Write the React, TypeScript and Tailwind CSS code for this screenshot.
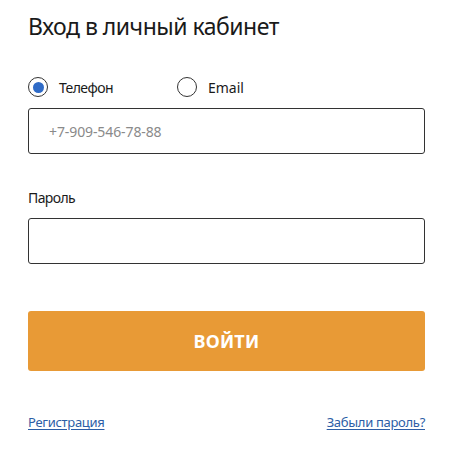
import React from "react";

export default function App() {
  return (
    <div className="w-[457px] h-[450px] bg-white px-[28px] pt-[11px]" style={{ fontFamily: '"Noto Sans", "Open Sans", sans-serif' }}>
      <h1 className="text-[23px] leading-[30px] text-[#1a1a1a] tracking-[-0.5px]">Вход в личный кабинет</h1>
      <div className="mt-[35px] flex items-center h-[22px] text-[14px] text-[#1a1a1a]">
        <label className="flex items-center w-[149px]">
          <span className="w-[20px] h-[20px] rounded-full border border-[#333] flex items-center justify-center">
            <span className="w-[11px] h-[11px] rounded-full bg-[#2f6bc7]" />
          </span>
          <span className="ml-[11px] tracking-[-0.6px]">Телефон</span>
        </label>
        <label className="flex items-center">
          <span className="w-[20px] h-[20px] rounded-full border border-[#333]" />
          <span className="ml-[11px]">Email</span>
        </label>
      </div>
      <div className="mt-[10px] h-[46px] w-[397px] border border-[#333] rounded-[3px] flex items-center pl-[20px] text-[14px] text-[#8a8a8a] tracking-[-0.1px]">
        +7-909-546-78-88
      </div>
      <div className="mt-[34px] text-[14px] leading-[20px] text-[#1a1a1a] tracking-[-0.6px]">Пароль</div>
      <div className="mt-[10px] h-[46px] w-[397px] border border-[#333] rounded-[3px]" />
      <button className="mt-[47px] h-[60px] w-[397px] rounded-[3px] bg-[#e89a36] text-white text-[18px] font-bold tracking-[0.2px]">
        ВОЙТИ
      </button>
      <div className="mt-[42px] w-[397px] flex justify-between text-[13px] leading-[18px] text-[#2d5ea6] tracking-[-0.3px]">
        <a className="underline underline-offset-2">Регистрация</a>
        <a className="underline underline-offset-2">Забыли пароль?</a>
      </div>
    </div>
  );
}
